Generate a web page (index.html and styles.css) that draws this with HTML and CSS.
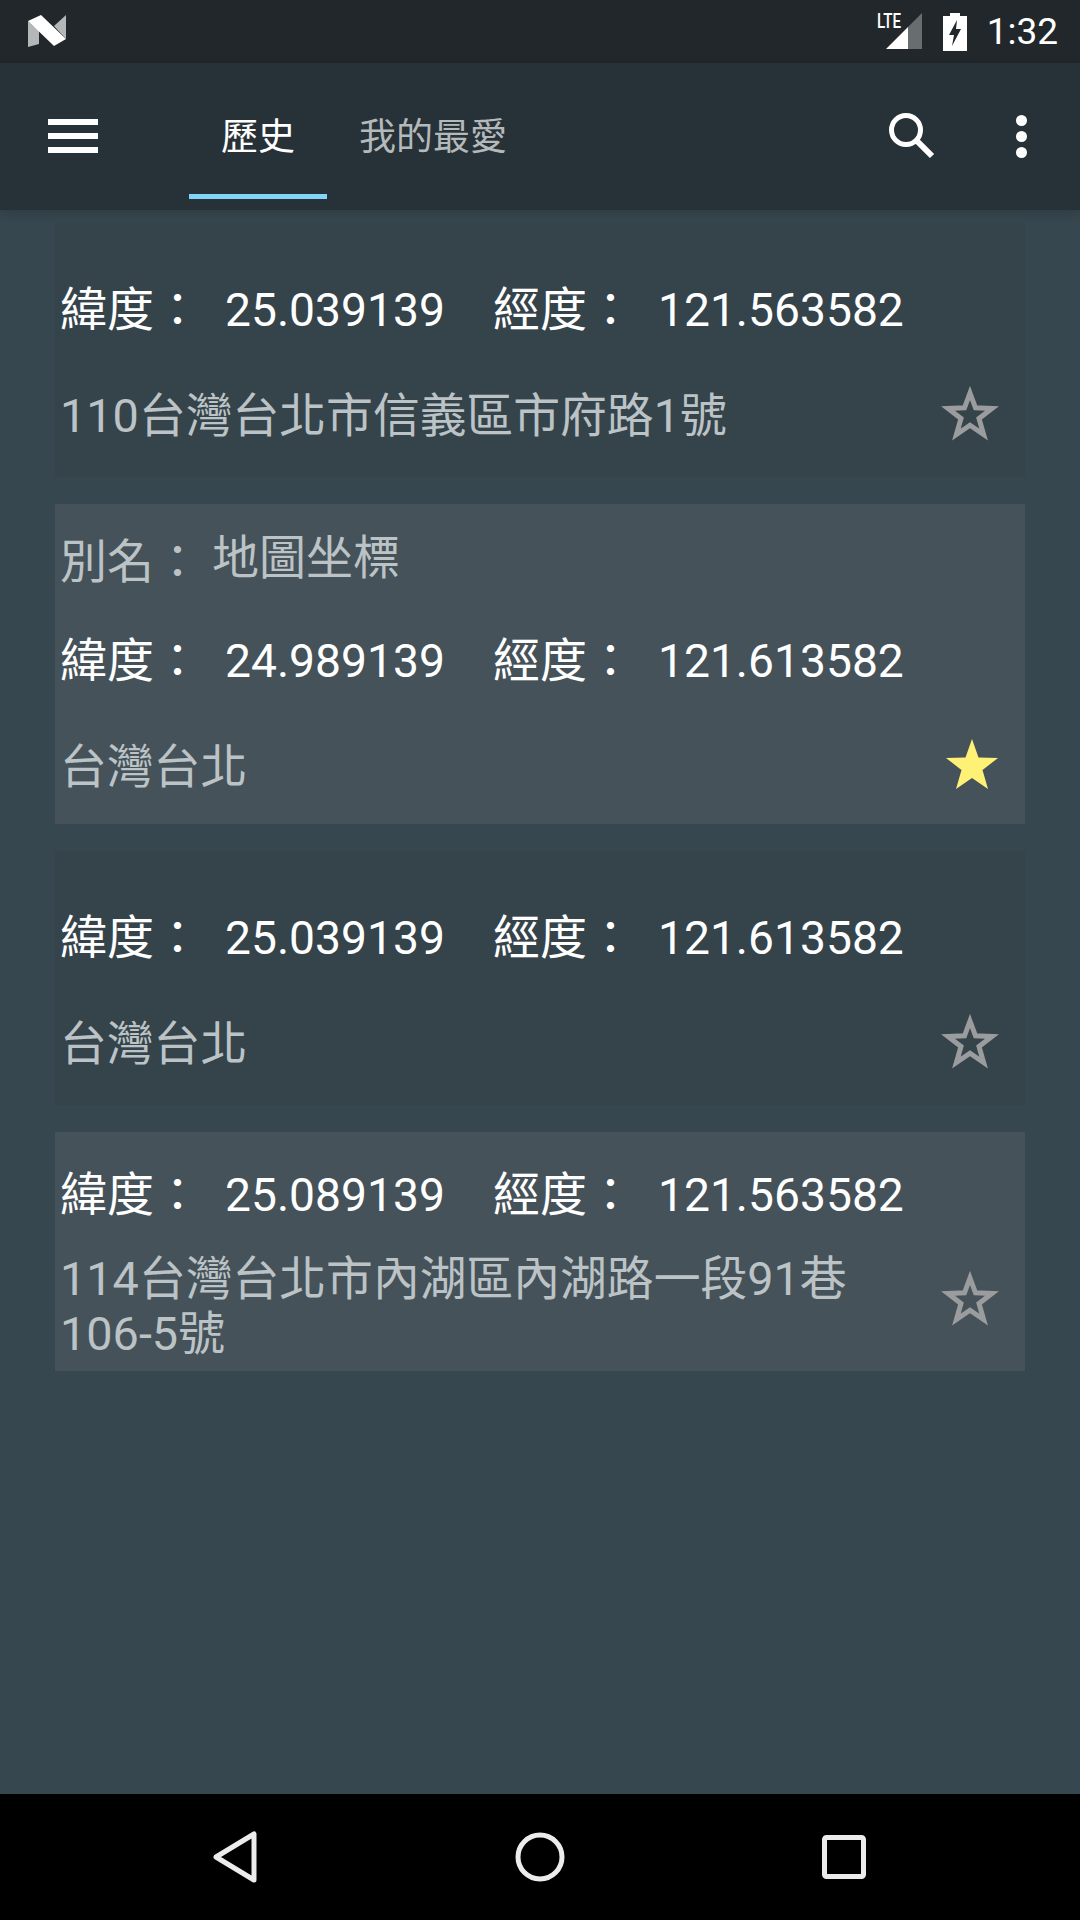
FILE: index.html
```html
<!DOCTYPE html>
<html lang="zh-Hant">
<head>
    <meta charset="UTF-8">
    <meta name="viewport" content="width=device-width, initial-scale=1.0">
    <title>歷史</title>
    <link rel="stylesheet" href="styles.css">
</head>
<body>
    <div class="status-bar">
        <svg class="n-logo" width="40" height="32" viewBox="0 0 40 32">
            <path d="M1 6 L12 16 V29 L1 32 Z" fill="#b4b7b8"/>
            <path d="M1 6 L14 0 L39 24 L27 31 Z" fill="#fff"/>
            <path d="M27 11 L39 0 V24 Z" fill="#b4b7b8"/>
        </svg>
        <div class="status-right">
            <div class="signal">
                <span class="lte">LTE</span>
                <svg width="36" height="36" viewBox="0 0 36 36">
                    <path d="M0 36 L22 14 V36 Z" fill="#fff"/>
                    <path d="M22 14 L36 0 V36 H22 Z" fill="#686d70"/>
                </svg>
            </div>
            <svg class="battery" width="24" height="38" viewBox="0 0 24 38">
                <path d="M7 0 H17 V3 H24 V38 H0 V3 H7 Z M14 7 L6 22 H11 L9 33 L18 16 H13 Z" fill="#fff" fill-rule="evenodd"/>
            </svg>
            <span class="clock">1:32</span>
        </div>
    </div>

    <div class="toolbar">
        <div class="menu-btn"><span></span><span></span><span></span></div>
        <div class="tabs">
            <div class="tab active">歷史</div>
            <div class="tab">我的最愛</div>
        </div>
        <svg class="search" width="48" height="48" viewBox="0 0 48 48">
            <circle cx="19" cy="19" r="14.5" fill="none" stroke="#fff" stroke-width="5"/>
            <path d="M29.5 29.5 L45 45" stroke="#fff" stroke-width="6" fill="none"/>
        </svg>
        <div class="more"><span></span><span></span><span></span></div>
    </div>

    <div class="list">
        <div class="card dark">
            <div class="alias"></div>
            <div class="coords">
                <span class="label">緯度：</span><span class="num">25.039139</span>
                <span class="label second">經度：</span><span class="num">121.563582</span>
            </div>
            <div class="address">
                <div class="addr-text">110台灣台北市信義區市府路1號</div>
                <svg class="star" width="60" height="56" viewBox="0 0 60 56"><path d="M30 8 L35.5 22.8 L52 23.4 L39 33.5 L43.6 49.5 L30 40.2 L16.4 49.5 L21 33.5 L8 23.4 L24.5 22.8 Z" fill="none" stroke="#9a9c9e" stroke-width="5"/></svg>
            </div>
        </div>

        <div class="card light tall">
            <div class="alias"><span class="alias-label">別名：</span><span class="alias-name">地圖坐標</span></div>
            <div class="coords">
                <span class="label">緯度：</span><span class="num">24.989139</span>
                <span class="label second">經度：</span><span class="num">121.613582</span>
            </div>
            <div class="address">
                <div class="addr-text">台灣台北</div>
                <svg class="star on" width="60" height="56" viewBox="0 0 60 56"><path d="M32 2 L38.5 20.5 L58 21 L42.5 33 L48 52 L32 41 L16 52 L21.5 33 L6 21 L25.5 20.5 Z" fill="#fff176"/></svg>
            </div>
        </div>

        <div class="card dark">
            <div class="alias"></div>
            <div class="coords">
                <span class="label">緯度：</span><span class="num">25.039139</span>
                <span class="label second">經度：</span><span class="num">121.613582</span>
            </div>
            <div class="address">
                <div class="addr-text">台灣台北</div>
                <svg class="star" width="60" height="56" viewBox="0 0 60 56"><path d="M30 8 L35.5 22.8 L52 23.4 L39 33.5 L43.6 49.5 L30 40.2 L16.4 49.5 L21 33.5 L8 23.4 L24.5 22.8 Z" fill="none" stroke="#9a9c9e" stroke-width="5"/></svg>
            </div>
        </div>

        <div class="card light compact">
            <div class="coords">
                <span class="label">緯度：</span><span class="num">25.089139</span>
                <span class="label second">經度：</span><span class="num">121.563582</span>
            </div>
            <div class="address">
                <div class="addr-text">114台灣台北市內湖區內湖路一段91巷<br>106-5號</div>
                <svg class="star" width="60" height="56" viewBox="0 0 60 56"><path d="M30 8 L35.5 22.8 L52 23.4 L39 33.5 L43.6 49.5 L30 40.2 L16.4 49.5 L21 33.5 L8 23.4 L24.5 22.8 Z" fill="none" stroke="#9a9c9e" stroke-width="5"/></svg>
            </div>
        </div>
    </div>

    <div class="nav-bar">
        <svg width="44" height="52" viewBox="0 0 44 52"><path d="M41 3 V49 L3 26 Z" fill="none" stroke="#ececec" stroke-width="5" stroke-linejoin="round"/></svg>
        <svg width="50" height="50" viewBox="0 0 50 50"><circle cx="25" cy="25" r="22" fill="none" stroke="#ececec" stroke-width="5"/></svg>
        <svg width="44" height="44" viewBox="0 0 44 44"><rect x="2.5" y="2.5" width="39" height="39" rx="2" fill="none" stroke="#ececec" stroke-width="5"/></svg>
    </div>
</body>
</html>
```

FILE: styles.css
```css
* { box-sizing: border-box; }
html, body { margin: 0; padding: 0; }
body { width: 1080px; height: 1920px; display: flex; flex-direction: column; background-color: #37474f; color: #fff; font-family: Roboto, "Noto Sans CJK TC", sans-serif; overflow: hidden; }

.status-bar { height: 63px; background-color: #21272b; display: flex; align-items: center; justify-content: space-between; padding: 0 22px 0 27px; }
.n-logo { margin-top: -1px; }
.status-right { display: flex; align-items: center; }
.signal { position: relative; width: 45px; height: 36px; display: flex; justify-content: flex-end; margin-top: -1px; }
.lte { position: absolute; left: 0; top: -3px; font-size: 21px; line-height: 22px; font-weight: 500; transform: scaleX(0.72); transform-origin: left; }
.battery { margin-left: 21px; }
.clock { font-size: 37px; line-height: 42px; margin-left: 20px; }

.toolbar { height: 147px; background-color: #273238; display: flex; align-items: center; padding: 0 0 0 48px; position: relative; z-index: 1; box-shadow: 0 3px 10px rgba(0, 0, 0, 0.18); }
.menu-btn { width: 50px; height: 34px; display: flex; flex-direction: column; justify-content: space-between; margin-top: -1px; }
.menu-btn span { height: 6px; background-color: #fff; }
.tabs { display: flex; align-self: stretch; margin-left: 91px; }
.tab { padding: 11px 32px 0; font-size: 37px; color: #b4b9bb; display: flex; align-items: center; border-bottom: 5px solid transparent; height: 136px; }
.tab.active { color: #fff; border-bottom-color: #81d4fa; }
.search { margin-left: auto; margin-top: -3px; }
.more { width: 12px; height: 43px; margin: 0 52px 0 81px; display: flex; flex-direction: column; justify-content: space-between; }
.more span { width: 11px; height: 11px; border-radius: 50%; background-color: #fff; }

.list { flex: 1; padding: 13px 55px 0; display: flex; flex-direction: column; gap: 27px; }
.card { padding-left: 5px; }
.card.dark { background-color: #35434b; height: 254px; }
.card.light { background-color: #455259; }
.card.tall { height: 320px; }
.card.compact { height: 239px; }
.alias { height: 34px; display: flex; font-size: 47px; line-height: 100px; color: #bcc3c6; }
.tall .alias { height: 104px; padding-top: 8px; }
.alias-name { margin-left: 11px; margin-top: -4px; }
.coords { height: 130px; display: flex; align-items: baseline; font-size: 47px; padding-top: 14px; }
.label { width: 165px; }
.label.second { margin-left: 51px; }
.num { width: 217px; font-size: 46.2px; }
.address { display: flex; align-items: center; justify-content: space-between; font-size: 46.8px; line-height: 55px; color: #bcc3c6; padding-right: 25px; margin-top: 2px; }
.addr-text { width: 800px; }
.star { flex: none; margin-top: -7px; }
.star.on { margin-top: -5px; }
.compact .coords { height: 118px; padding-top: 24px; }
.compact .star { margin-top: -18px; }

.nav-bar { height: 126px; background-color: #000; display: flex; align-items: center; justify-content: space-between; padding: 0 214px 0 213px; }
```
